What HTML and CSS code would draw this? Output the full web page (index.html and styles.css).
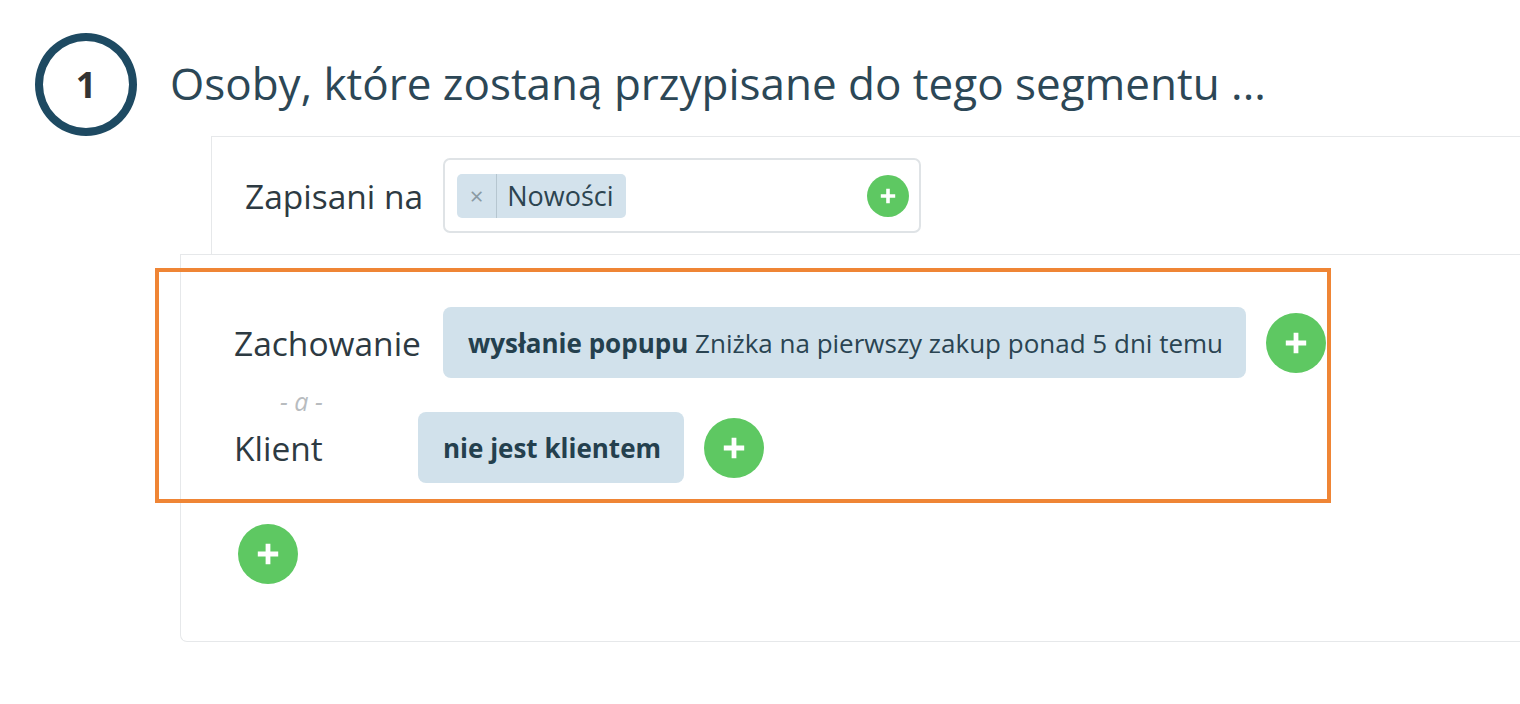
FILE: index.html
```html
<!DOCTYPE html>
<html lang="pl">
<head>
<meta charset="utf-8">
<link rel="stylesheet" href="styles.css">
</head>
<body>
<div class="page">
  <header class="step-head">
    <div class="step-num">1</div>
    <h1 class="step-title">Osoby, które zostaną przypisane do tego segmentu ...</h1>
  </header>
  <div class="top-box">
    <span class="label label-lists">Zapisani na</span>
    <div class="select-box">
      <span class="tag"><span class="tag-x">×</span><span class="tag-text">Nowości</span></span>
      <span class="plus plus-sm"><svg viewBox="0 0 20 20"><path d="M10 4v12M4 10h12"/></svg></span>
    </div>
  </div>
  <div class="cond-box">
    <div class="group">
      <div class="row">
        <span class="label label-beh">Zachowanie</span>
        <span class="pill"><b>wysłanie popupu</b> Zniżka na pierwszy zakup ponad 5 dni temu</span>
        <span class="plus"><svg viewBox="0 0 20 20"><path d="M10 4v12M4 10h12"/></svg></span>
      </div>
      <div class="and">- a -</div>
      <div class="row">
        <span class="label label-client">Klient</span>
        <span class="pill"><b>nie jest klientem</b></span>
        <span class="plus"><svg viewBox="0 0 20 20"><path d="M10 4v12M4 10h12"/></svg></span>
      </div>
    </div>
    <div class="add-row">
      <span class="plus"><svg viewBox="0 0 20 20"><path d="M10 4v12M4 10h12"/></svg></span>
    </div>
  </div>
</div>
</body>
</html>
```

FILE: styles.css
```css
* { box-sizing: border-box; }
html, body { margin: 0; padding: 0; background: #fff; }
body {
  font-family: "Open Sans", "Noto Sans", sans-serif;
  color: #2b4350;
  width: 1520px;
  height: 704px;
  overflow: hidden;
}
.page { padding-top: 33px; }

.step-head {
  display: flex;
  align-items: center;
  padding-left: 35px;
  gap: 33px;
  height: 103px;
}
.step-num {
  width: 102px;
  height: 103px;
  border: 8px solid #1e4a62;
  border-radius: 50%;
  display: flex;
  align-items: center;
  justify-content: center;
  font-size: 36px;
  font-weight: 700;
  color: #333;
}
.step-title {
  margin: 0 0 4px 0;
  font-weight: 400;
  font-size: 44px;
  color: #2c4756;
  letter-spacing: 0;
}

.top-box {
  margin-left: 211px;
  border: 1px solid #e6e8ea;
  border-right: none;
  border-bottom: none;
  height: 118px;
  display: flex;
  align-items: center;
  padding-left: 33px;
  gap: 20px;
}
.label {
  font-size: 33.5px;
  color: #2d3a42;
}
.select-box {
  width: 478px;
  height: 75px;
  border: 2px solid #dfe3e6;
  border-radius: 7px;
  display: flex;
  align-items: center;
  justify-content: space-between;
  padding: 0 10px 0 12px;
}
.tag {
  display: flex;
  align-items: stretch;
  height: 44px;
  background: #d3e2ec;
  border-radius: 5px;
  font-size: 27px;
}
.tag-x {
  width: 40px;
  display: flex;
  align-items: center;
  justify-content: center;
  color: #8a9aa4;
  font-size: 24px;
  border-right: 1px solid #b6c6d0;
}
.tag-text {
  display: flex;
  align-items: center;
  padding: 0 12px 0 10px;
  color: #2c4450;
}
.plus {
  flex: none;
  width: 60px;
  height: 60px;
  border-radius: 50%;
  background: #5ec862;
  display: flex;
  align-items: center;
  justify-content: center;
}
.plus svg { width: 34px; height: 34px; }
.plus path { stroke: #fff; stroke-width: 2.8; fill: none; }
.plus-sm { width: 42px; height: 42px; }
.plus-sm svg { width: 24px; height: 24px; }
.plus-sm path { stroke-width: 3; }

.cond-box {
  margin-left: 180px;
  border: 1px solid #e6e8ea;
  border-right: none;
  border-radius: 0 0 0 7px;
  height: 388px;
  padding-top: 13px;
}
.group {
  margin-left: -26px;
  width: 1176px;
  height: 235px;
  border: 4px solid #ef8535;
  padding: 35px 0 0 75px;
}
.row {
  display: flex;
  align-items: center;
  height: 71px;
}
.pill {
  height: 71px;
  display: flex;
  align-items: center;
  background: #d1e1eb;
  border-radius: 8px;
  padding: 0 23px 0 25px;
  font-size: 26px;
  color: #2a4452;
  white-space: pre;
}
.pill b { font-weight: 700; color: #24404e; }
.row .plus { margin-left: 20px; }
.label-beh { margin-right: 22px; }
.label-client { width: 184px; }
.and {
  height: 34px;
  line-height: 34px;
  padding: 6px 0 0 46px;
  font-style: italic;
  font-size: 25px;
  color: #b8bcbf;
}
.add-row {
  padding: 21px 0 0 57px;
}
```
